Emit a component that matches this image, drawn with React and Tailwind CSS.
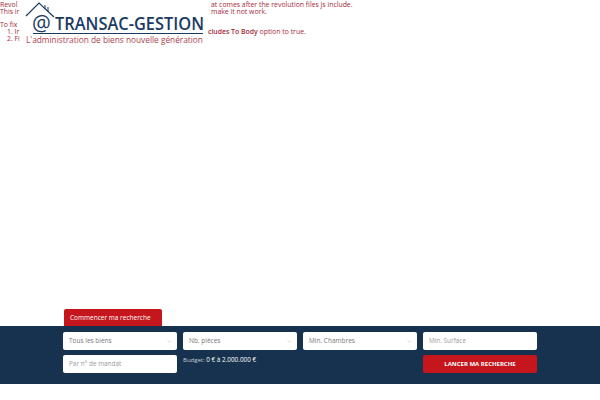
import React from "react";

const Chevron = () => (
  <svg width="5" height="3" viewBox="0 0 6 4" className="shrink-0">
    <path d="M0.5 0.5 L3 3 L5.5 0.5" fill="none" stroke="#c9ced4" strokeWidth="1" />
  </svg>
);

const Select = ({ label }) => (
  <div className="h-[18px] bg-white rounded-[2px] flex items-center justify-between pl-[6px] pr-[5px] text-[6.5px] text-[#777777]">
    <span>{label}</span>
    <Chevron />
  </div>
);

const Field = ({ label }) => (
  <div className="h-[18px] bg-white rounded-[2px] flex items-center pl-[6px] text-[6.4px] text-[#9a9a9a]">
    {label}
  </div>
);

export default function App() {
  return (
    <div className="w-[600px] h-[400px] overflow-hidden bg-white flex flex-col font-['Open_Sans',sans-serif]">
      <div className="flex text-[6.9px] leading-[7px] text-[#a3283a] whitespace-nowrap">
        <div className="w-[20px] shrink-0 pt-[1px]">
          <p>Revol</p>
          <p>This ir</p>
          <p className="mt-[6px]">To fix</p>
          <p className="pl-[7px]">1. Ir</p>
          <p className="pl-[7px]">2. Fi</p>
        </div>

        <div className="relative w-[191px] h-[48px] shrink-0 text-[#1a3a63]">
          <svg width="60" height="28" viewBox="0 0 60 28" className="absolute left-[2px] top-0">
            <path d="M4 16 L17 3 L32 17" fill="none" stroke="#1a3a63" strokeWidth="1.2" />
            <path d="M23 5 L23 9 M26 7 L26 12" fill="none" stroke="#1a3a63" strokeWidth="1" />
          </svg>
          <span className="absolute left-[12px] top-[11px] text-[21px] leading-[24px]">@</span>
          <span className="absolute left-[35px] top-[12px] text-[16.4px] leading-[24px] font-semibold origin-bottom scale-y-[1.05]">TRANSAC-GESTION</span>
          <div className="absolute left-[13px] w-[170px] top-[33px] h-[1px] bg-[#1a3a63]" />
          <span className="absolute left-[6px] top-[33px] text-[8.3px] leading-[12px] text-[#a9414e] origin-top scale-y-[1.15]">L'administration de biens nouvelle génération</span>
        </div>

        <div className="flex-1 pt-[1px]">
          <p>at comes after the revolution files js include.</p>
          <p>make it not work.</p>
          <p className="mt-[13px] -ml-[3px]">
            <b className="font-semibold">cludes To Body</b> option to true.
          </p>
        </div>
      </div>

      <div className="mt-auto mb-[16px]">
        <div className="ml-[64px] w-[98px] h-[17px] bg-[#c4161c] rounded-t-[2px] flex items-center pl-[6px] text-[6.5px] text-white whitespace-nowrap">
          Commencer ma recherche
        </div>
        <div className="h-[58px] bg-[#17324f] pl-[63px] pt-[6px]">
          <div className="grid grid-cols-[114px_114px_114px_114px] gap-x-[6px] gap-y-[5px]">
            <Select label="Tous les biens" />
            <Select label="Nb. pièces" />
            <Select label="Min. Chambres" />
            <Field label="Min. Surface" />
            <Field label="Par n° de mandat" />
            <div className="col-span-2 text-[6px] leading-[18px] text-[#c3ccd6] -mt-[4px]">
              Budget: <span className="text-[6.4px] text-white">0 € à 2.000.000 €</span>
            </div>
            <div className="h-[18px] bg-[#c4161c] rounded-[2px] flex items-center justify-center text-[6px] font-bold text-white">
              LANCER MA RECHERCHE
            </div>
          </div>
        </div>
      </div>
    </div>
  );
}
